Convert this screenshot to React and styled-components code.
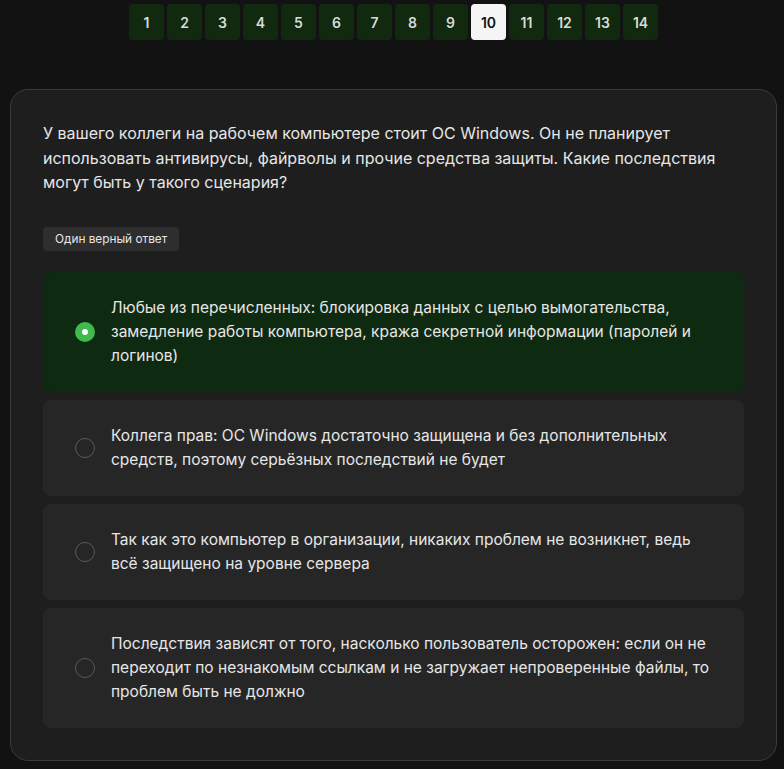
import React from "react";
import styled, { createGlobalStyle } from "styled-components";

const Global = createGlobalStyle`
  html, body { margin: 0; padding: 0; background: #121212; }
  body { font-family: Inter, "Noto Sans", sans-serif; color: #e6e6e6; }
  * { box-sizing: border-box; }
`;

const Page = styled.div`
  width: 784px;
  min-height: 769px;
  padding: 4px 7px 8px 10px;
  display: flex;
  flex-direction: column;
  align-items: stretch;
`;

const Pager = styled.div`
  display: flex;
  justify-content: center;
  gap: 3px;
`;

const PageBtn = styled.div`
  width: 35px;
  height: 36px;
  border-radius: 4px;
  display: flex;
  align-items: center;
  justify-content: center;
  font-size: 14px;
  font-weight: 600;
  background: ${(p) => (p.$active ? "#f5f5f5" : "#10290f")};
  color: ${(p) => (p.$active ? "#111" : "#d8dcd8")};
`;

const Card = styled.div`
  margin-top: 49px;
  background: #1e1e1e;
  border: 1px solid #3b3b3b;
  border-radius: 18px;
  padding: 31px 32px 32px 32px;
  display: flex;
  flex-direction: column;
`;

const Question = styled.p`
  margin: 0;
  font-size: 16px;
  line-height: 24.5px;
  color: #e6e6e6;
  padding-right: 20px;
`;

const Tag = styled.div`
  align-self: flex-start;
  margin-top: 32px;
  height: 24px;
  padding: 0 12px;
  display: flex;
  align-items: center;
  background: #2e2e2e;
  border-radius: 4px;
  font-size: 11.8px;
  color: #e6e6e6;
`;

const Options = styled.div`
  margin-top: 21px;
  display: flex;
  flex-direction: column;
  gap: 8px;
`;

const Option = styled.div`
  display: flex;
  align-items: center;
  gap: 16px;
  padding: 24px 32px 24px 32px;
  border-radius: 8px;
  background: ${(p) => (p.$selected ? "#0e2a10" : "#262626")};
`;

const Radio = styled.div`
  flex: none;
  width: 20px;
  height: 20px;
  border-radius: 50%;
  display: flex;
  align-items: center;
  justify-content: center;
  background: ${(p) => (p.$selected ? "#3fba4c" : "transparent")};
  border: ${(p) => (p.$selected ? "none" : "1.5px solid #5a5a5a")};
  &::after {
    content: "";
    display: ${(p) => (p.$selected ? "block" : "none")};
    width: 6px;
    height: 6px;
    border-radius: 50%;
    background: #fff;
  }
`;

const OptionText = styled.div`
  font-size: 15.5px;
  line-height: 24px;
  color: #e6e6e6;
`;

const options = [
  "Любые из перечисленных: блокировка данных с целью вымогательства, замедление работы компьютера, кража секретной информации (паролей и логинов)",
  "Коллега прав: ОС Windows достаточно защищена и без дополнительных средств, поэтому серьёзных последствий не будет",
  "Так как это компьютер в организации, никаких проблем не возникнет, ведь всё защищено на уровне сервера",
  "Последствия зависят от того, насколько пользователь осторожен: если он не переходит по незнакомым ссылкам и не загружает непроверенные файлы, то проблем быть не должно",
];

export default function App() {
  return (
    <>
      <Global />
      <Page>
        <Pager>
          {Array.from({ length: 14 }, (_, i) => (
            <PageBtn key={i} $active={i === 9}>
              {i + 1}
            </PageBtn>
          ))}
        </Pager>
        <Card>
          <Question>
            У вашего коллеги на рабочем компьютере стоит ОС Windows. Он не планирует
            использовать антивирусы, файрволы и прочие средства защиты. Какие последствия
            могут быть у такого сценария?
          </Question>
          <Tag>Один верный ответ</Tag>
          <Options>
            {options.map((t, i) => (
              <Option key={i} $selected={i === 0}>
                <Radio $selected={i === 0} />
                <OptionText>{t}</OptionText>
              </Option>
            ))}
          </Options>
        </Card>
      </Page>
    </>
  );
}
